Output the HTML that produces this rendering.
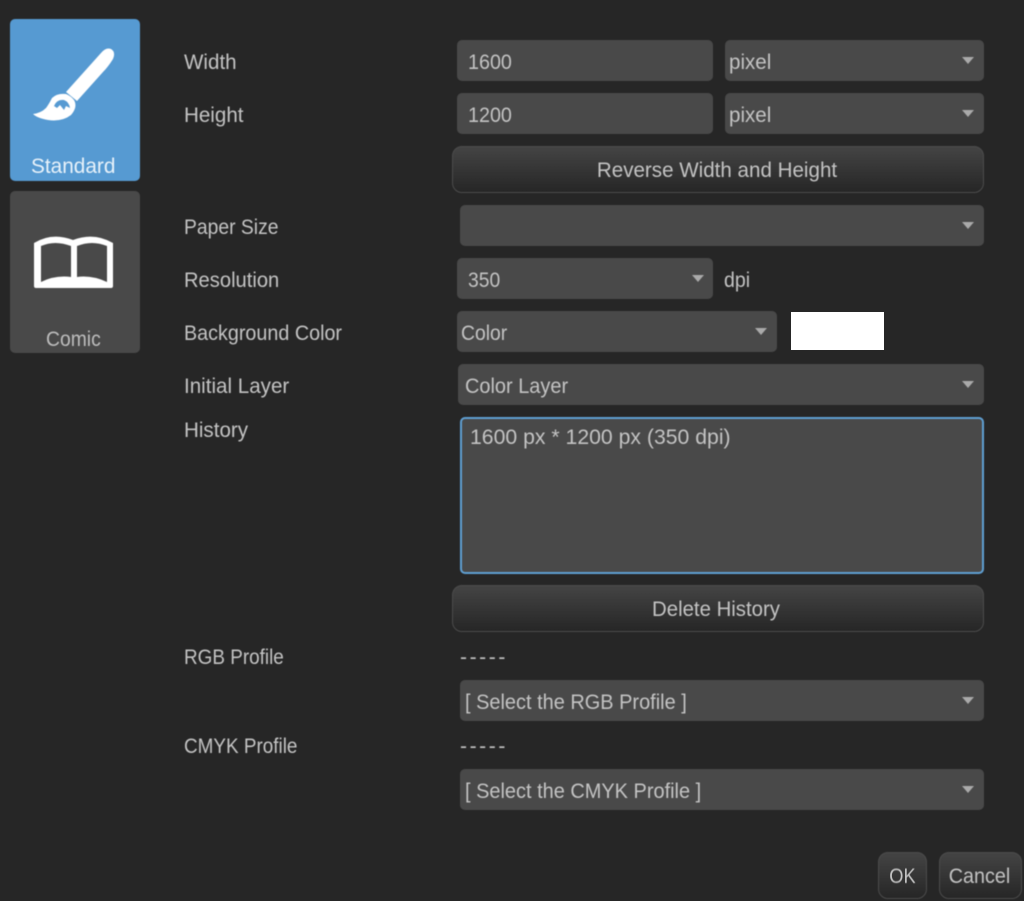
<!DOCTYPE html>
<html><head><meta charset="utf-8"><style>
html,body{margin:0;padding:0;background:#262626;}
#r{position:relative;width:1024px;height:901px;overflow:hidden;background:#262626;font-family:"Liberation Sans",sans-serif;font-size:21px;color:#c4c4c4;}
.t{position:absolute;white-space:nowrap;line-height:26px;height:26px;filter:blur(.45px);transform-origin:left center;}
.c{transform-origin:center center;}
.b{position:absolute;background:#494949;border-radius:5px;filter:blur(.5px);}
.btn{position:absolute;border-radius:10px;border:1.5px solid #4c4c4c;box-sizing:border-box;background:linear-gradient(#444,#262626);filter:blur(.4px);}
.a{position:absolute;width:0;height:0;margin-left:1px;border-left:6px solid transparent;border-right:6px solid transparent;border-top:7px solid #aaa;filter:blur(.5px);}
</style></head><body><div id="r">

<div class="b" style="left:10px;top:19px;width:130px;height:162px;background:#569ad2;"></div>
<div class="b" style="left:10px;top:191px;width:130px;height:162px;"></div>
<svg style="position:absolute;left:0;top:0;filter:blur(.4px)" width="150" height="360">
<path d="M101 53 Q106 47 111 49 Q116 52 113 59 Q108 67 103 72 L77 101 L66 92 Z" fill="#fff"/>
<path d="M66 94 Q57 93 52 98 Q49 104 46 108 Q41 113 33 114 Q37 118 48 120 Q62 122 71 115 Q78 107 74 100 Q71 96 66 94 Z" fill="#fff"/>
<path d="M54 106 Q57 99 64 100 Q69 102 70 108 L66 106 L64 110 L60 105 L57 108 Z" fill="#569ad2"/>
<path fill-rule="evenodd" d="M34 243 Q52 232 73 240 Q94 232 113 243 V286 Q113 288 111 288 H36 Q34 288 34 286 Z M41 246 Q55 240 71 246 V277 Q55 275 41 282 Z M77 246 Q92 240 107 246 V282 Q92 275 77 277 Z" fill="#fff"/>
</svg>
<div class="t" style="left:31px;top:154px;color:#e8f2fa;transform:scaleX(.99)">Standard</div>
<div class="t" style="left:46px;top:327px;color:#bdbdbd;transform:scaleX(.92)">Comic</div>

<div class="t" style="left:184px;top:50px;transform:scaleX(.98)">Width</div>
<div class="t" style="left:184px;top:103px;transform:scaleX(.98)">Height</div>
<div class="t" style="left:184px;top:215px;transform:scaleX(.92)">Paper Size</div>
<div class="t" style="left:184px;top:268px;transform:scaleX(.96)">Resolution</div>
<div class="t" style="left:184px;top:321px;transform:scaleX(.94)">Background Color</div>
<div class="t" style="left:184px;top:374px;transform:scaleX(.98)">Initial Layer</div>
<div class="t" style="left:184px;top:418px;transform:scaleX(.98)">History</div>
<div class="t" style="left:184px;top:645px;transform:scaleX(.9)">RGB Profile</div>
<div class="t" style="left:184px;top:734px;transform:scaleX(.9)">CMYK Profile</div>

<div class="b" style="left:457px;top:40px;width:256px;height:41px;"></div>
<div class="t" style="left:468px;top:50px;transform:scaleX(.94)">1600</div>
<div class="b" style="left:725px;top:40px;width:259px;height:41px;"></div>
<div class="t" style="left:729px;top:50px;transform:scaleX(.98)">pixel</div>
<div class="a" style="left:961px;top:57px"></div>

<div class="b" style="left:457px;top:93px;width:256px;height:41px;"></div>
<div class="t" style="left:468px;top:103px;transform:scaleX(.94)">1200</div>
<div class="b" style="left:725px;top:93px;width:259px;height:41px;"></div>
<div class="t" style="left:729px;top:103px;transform:scaleX(.98)">pixel</div>
<div class="a" style="left:961px;top:110px"></div>

<div class="btn" style="left:452px;top:146px;width:532px;height:47px;"></div>
<div class="t c" style="left:452px;top:158px;width:530px;text-align:center;transform:scaleX(.98)">Reverse Width and Height</div>

<div class="b" style="left:460px;top:205px;width:524px;height:41px;"></div>
<div class="a" style="left:961px;top:222px"></div>

<div class="b" style="left:457px;top:258px;width:256px;height:41px;"></div>
<div class="t" style="left:468px;top:268px;transform:scaleX(.92)">350</div>
<div class="a" style="left:691px;top:275px"></div>
<div class="t" style="left:724px;top:268px;transform:scaleX(.93)">dpi</div>

<div class="b" style="left:457px;top:311px;width:320px;height:41px;"></div>
<div class="t" style="left:461px;top:321px;transform:scaleX(.92)">Color</div>
<div class="a" style="left:754px;top:328px"></div>
<div style="position:absolute;left:791px;top:312px;width:93px;height:38px;background:#fff;"></div>

<div class="b" style="left:458px;top:364px;width:526px;height:41px;"></div>
<div class="t" style="left:465px;top:374px;transform:scaleX(.95)">Color Layer</div>
<div class="a" style="left:961px;top:381px"></div>

<div class="b" style="left:460px;top:417px;width:524px;height:157px;box-sizing:border-box;border:2px solid #5f9fd2;"></div>
<div class="t" style="left:470px;top:425px;transform:scaleX(1.01)">1600 px * 1200 px (350 dpi)</div>

<div class="btn" style="left:452px;top:585px;width:532px;height:47px;"></div>
<div class="t c" style="left:451px;top:597px;width:530px;text-align:center;transform:scaleX(.97)">Delete History</div>

<div class="t" style="left:460px;top:645px;letter-spacing:2.6px">-----</div>
<div class="b" style="left:460px;top:680px;width:524px;height:41px;"></div>
<div class="t" style="left:465px;top:690px;transform:scaleX(.95)">[ Select the RGB Profile ]</div>
<div class="a" style="left:961px;top:697px"></div>

<div class="t" style="left:460px;top:734px;letter-spacing:2.6px">-----</div>
<div class="b" style="left:460px;top:769px;width:524px;height:41px;"></div>
<div class="t" style="left:465px;top:779px;transform:scaleX(.95)">[ Select the CMYK Profile ]</div>
<div class="a" style="left:961px;top:786px"></div>

<div class="btn" style="left:878px;top:852px;width:49px;height:47px;"></div>
<div class="t c" style="left:878px;top:864px;width:49px;text-align:center;transform:scaleX(.87)">OK</div>
<div class="btn" style="left:939px;top:852px;width:83px;height:47px;"></div>
<div class="t c" style="left:939px;top:864px;width:81px;text-align:center;transform:scaleX(.94)">Cancel</div>

</div></body></html>
